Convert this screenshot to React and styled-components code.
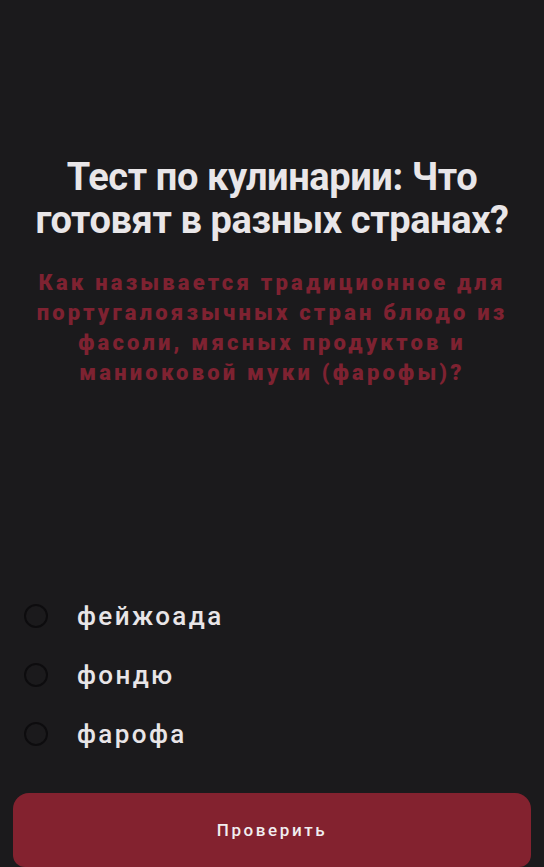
import React, { useState } from "react";
import styled, { createGlobalStyle } from "styled-components";

const GlobalStyle = createGlobalStyle`
  html, body {
    margin: 0;
    padding: 0;
    background: #1b1a1c;
  }
  body {
    font-family: Roboto, "Noto Sans", sans-serif;
  }
`;

const Screen = styled.div`
  box-sizing: border-box;
  height: 867px;
  display: flex;
  flex-direction: column;
  background: #1b1a1c;
  padding: 0 13px;
`;

const Header = styled.div`
  padding-top: 156px;
  display: flex;
  flex-direction: column;
  align-items: center;
`;

const Title = styled.h1`
  margin: 0;
  font-size: 38px;
  line-height: 43px;
  font-weight: 700;
  color: #e9e6e8;
  text-align: center;
  letter-spacing: -0.4px;
`;

const Question = styled.p`
  margin: 26px 0 0;
  max-width: 490px;
  font-size: 22px;
  line-height: 30px;
  font-weight: 900;
  color: #7e2231;
  text-align: center;
  letter-spacing: 3.2px;
`;

const Options = styled.div`
  margin-top: auto;
  display: flex;
  flex-direction: column;
  gap: 35px;
  padding: 0 0 47px 11px;
`;

const Option = styled.label`
  display: flex;
  align-items: center;
  gap: 29px;
  cursor: pointer;
`;

const Radio = styled.span`
  box-sizing: border-box;
  width: 24px;
  height: 24px;
  border-radius: 50%;
  border: 2px solid ${(p) => (p.$checked ? "#83222f" : "#0d0c0e")};
  background: ${(p) => (p.$checked ? "#83222f" : "transparent")};
`;

const OptionText = styled.span`
  font-size: 26px;
  line-height: 24px;
  font-weight: 500;
  color: #e8e5e7;
  letter-spacing: 2.4px;
`;

const CheckButton = styled.button`
  flex-shrink: 0;
  height: 74px;
  border: none;
  border-radius: 16px 16px 12px 12px;
  background: #83222f;
  color: #f1eef0;
  font-family: Roboto, "Noto Sans", sans-serif;
  font-size: 17px;
  font-weight: 500;
  letter-spacing: 2.6px;
  cursor: pointer;
`;

const answers = ["фейжоада", "фондю", "фарофа"];

export default function App() {
  const [picked, setPicked] = useState(null);
  return (
    <>
      <GlobalStyle />
      <Screen>
        <Header>
          <Title>
            Тест по кулинарии: Что
            <br />
            готовят в разных странах?
          </Title>
          <Question>
            Как называется традиционное для португалоязычных стран блюдо из
            фасоли, мясных продуктов и маниоковой муки (фарофы)?
          </Question>
        </Header>
        <Options>
          {answers.map((a) => (
            <Option key={a} onClick={() => setPicked(a)}>
              <Radio $checked={picked === a} />
              <OptionText>{a}</OptionText>
            </Option>
          ))}
        </Options>
        <CheckButton>Проверить</CheckButton>
      </Screen>
    </>
  );
}
